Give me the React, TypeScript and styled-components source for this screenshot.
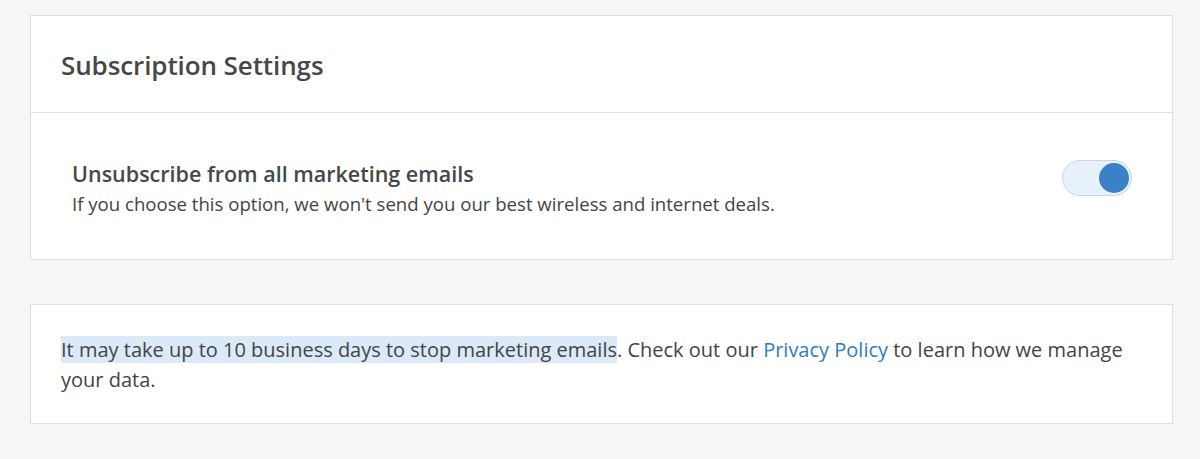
import React, { useState } from "react";
import styled, { createGlobalStyle } from "styled-components";

const Global = createGlobalStyle`
  html, body { margin: 0; padding: 0; background: #f6f6f6; }
  body { font-family: "Open Sans", "Noto Sans", sans-serif; color: #444; }
`;

const Page = styled.div`
  width: 1200px;
  height: 459px;
  box-sizing: border-box;
  padding: 15px 27px 0 30px;
  display: flex;
  flex-direction: column;
  gap: 44px;
`;

const Card = styled.section`
  background: #fff;
  border: 1px solid #dedede;
  display: flex;
  flex-direction: column;
`;

const CardHeader = styled.div`
  height: 97px;
  box-sizing: border-box;
  border-bottom: 1px solid #dedede;
  display: flex;
  align-items: center;
  padding: 2px 0 0 30px;
`;

const Title = styled.h2`
  margin: 0;
  font-size: 26px;
  font-weight: 600;
  color: #474747;
  letter-spacing: -0.1px;
`;

const Row = styled.div`
  height: 146px;
  box-sizing: border-box;
  display: flex;
  align-items: flex-start;
  justify-content: space-between;
  padding: 46px 40px 0 41px;
`;

const RowText = styled.div`
  display: flex;
  flex-direction: column;
`;

const RowTitle = styled.div`
  font-size: 21.5px;
  font-weight: 600;
  color: #474747;
  line-height: 30px;
`;

const RowSub = styled.div`
  font-size: 18.6px;
  color: #444;
  line-height: 30px;
`;

const Track = styled.button<{ $on: boolean }>`
  width: 70px;
  height: 36px;
  border-radius: 18px;
  border: 1px solid #cbd5df;
  background: ${(p) => (p.$on ? "#e6f1fc" : "#eee")};
  padding: 0 2px;
  display: flex;
  align-items: center;
  justify-content: ${(p) => (p.$on ? "flex-end" : "flex-start")};
  cursor: pointer;
  box-sizing: border-box;
  margin-top: 1px;
`;

const Knob = styled.span`
  width: 30px;
  height: 30px;
  border-radius: 50%;
  background: #3a81c6;
  display: block;
`;

const NoteCard = styled(Card)`
  height: 120px;
  box-sizing: border-box;
  padding: 30px 30px 0 30px;
`;

const Note = styled.p`
  margin: 0;
  font-size: 20px;
  line-height: 30px;
  color: #444;
`;

const Highlight = styled.span`
  background: #dbe9f8;
`;

const Link = styled.a`
  color: #2e7cc0;
  text-decoration: none;
`;

export default function App() {
  const [on, setOn] = useState(true);
  return (
    <>
      <Global />
      <Page>
        <Card>
          <CardHeader>
            <Title>Subscription Settings</Title>
          </CardHeader>
          <Row>
            <RowText>
              <RowTitle>Unsubscribe from all marketing emails</RowTitle>
              <RowSub>If you choose this option, we won't send you our best wireless and internet deals.</RowSub>
            </RowText>
            <Track $on={on} onClick={() => setOn(!on)} aria-pressed={on}>
              <Knob />
            </Track>
          </Row>
        </Card>
        <NoteCard>
          <Note>
            <Highlight>It may take up to 10 business days to stop marketing emails</Highlight>. Check out our{" "}
            <Link href="#">Privacy Policy</Link> to learn how we manage your data.
          </Note>
        </NoteCard>
      </Page>
    </>
  );
}
